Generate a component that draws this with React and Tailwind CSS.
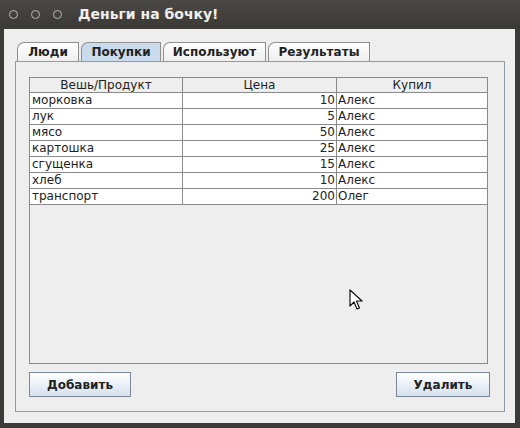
import React from 'react';

const rows = [
  { name: 'морковка', price: 10, who: 'Алекс' },
  { name: 'лук', price: 5, who: 'Алекс' },
  { name: 'мясо', price: 50, who: 'Алекс' },
  { name: 'картошка', price: 25, who: 'Алекс' },
  { name: 'сгущенка', price: 15, who: 'Алекс' },
  { name: 'хлеб', price: 10, who: 'Алекс' },
  { name: 'транспорт', price: 200, who: 'Олег' },
];

const tabs = [
  { label: 'Люди', w: 'w-[62px]' },
  { label: 'Покупки', w: 'w-[80px]', active: true },
  { label: 'Используют', w: 'w-[103px]' },
  { label: 'Результаты', w: 'w-[102px]' },
];

const font = { fontFamily: '"DejaVu Sans", "Liberation Sans", sans-serif' };

const App = () => {
  return (
    <div className="w-[520px] h-[428px] bg-[#3b3a36] flex flex-col relative overflow-hidden" style={font}>
      {/* Title bar */}
      <div className="h-[29px] flex items-center bg-gradient-to-b from-[#4a4945] to-[#3a3935] shrink-0">
        <div className="flex items-center gap-[13px] pl-[9px]">
          {[0, 1, 2].map((i) => (
            <div key={i} className="w-[9px] h-[9px] rounded-full border-[1.5px] border-[#b9b7b0]" />
          ))}
        </div>
        <div className="ml-[16px] text-[14px] font-bold text-[#f0efeb]">Деньги на бочку!</div>
      </div>

      {/* Window body */}
      <div className="ml-[4px] mr-[5px] mb-[5px] flex-1 bg-[#eeeeee] pl-[11px] pr-[10px] pt-[13px] pb-[11px] flex flex-col">
        {/* Tabs */}
        <div className="flex h-[19px] pl-[2px] gap-[2px] items-end">
          {tabs.map((t) => (
            <div
              key={t.label}
              className={`${t.w} h-[19px] flex items-center justify-center text-[12px] font-bold text-[#222] border border-b-0 border-[#8e8e8e] rounded-tl-[7px] ${
                t.active ? 'bg-[#c9dbed]' : 'bg-gradient-to-b from-[#ffffff] to-[#eeeeee]'
              }`}
            >
              {t.label}
            </div>
          ))}
        </div>

        {/* Tab panel */}
        <div className="flex-1 border border-[#8e9aa6] bg-[#eeeeee] pl-[13px] pr-[16px] pt-[15px] pb-[13px] flex flex-col">
          {/* Table */}
          <div className="h-[287px] border border-[#8a8a8a] bg-[#eeeeee] flex flex-col">
            <div className="grid grid-cols-[153px_154px_1fr] h-[15px] bg-[#eeeeee] border-b border-[#8a8a8a] text-[12px] text-[#222] leading-[14px]">
              <div className="text-center border-r border-[#8a8a8a]">Вешь/Продукт</div>
              <div className="text-center border-r border-[#8a8a8a]">Цена</div>
              <div className="text-center">Купил</div>
            </div>
            {rows.map((r) => (
              <div
                key={r.name}
                className="grid grid-cols-[153px_154px_1fr] h-[16px] bg-white border-b border-[#8a8a8a] text-[12px] text-[#222] leading-[15px]"
              >
                <div className="pl-[2px] border-r border-[#8a8a8a]">{r.name}</div>
                <div className="text-right pr-[1px] border-r border-[#8a8a8a]">{r.price}</div>
                <div className="pl-[1px]">{r.who}</div>
              </div>
            ))}
          </div>

          {/* Buttons */}
          <div className="flex justify-between mt-[8px]">
            <button className="w-[102px] h-[25px] border border-[#7b8794] bg-gradient-to-b from-[#ffffff] to-[#d5e1ee] text-[12px] font-bold text-[#222]">
              Добавить
            </button>
            <button className="w-[94px] h-[25px] border border-[#7b8794] bg-gradient-to-b from-[#ffffff] to-[#d5e1ee] text-[12px] font-bold text-[#222] -mr-[2px]">
              Удалить
            </button>
          </div>
        </div>
      </div>

      {/* Mouse cursor */}
      <svg className="absolute left-[349px] top-[289px]" width="14" height="22" viewBox="0 0 14 22">
        <path d="M1 1 L1 17 L5 13 L8 20 L10.5 19 L7.5 12 L13 12 Z" fill="#fff" stroke="#111" strokeWidth="1.2" strokeLinejoin="round" />
      </svg>
    </div>
  );
};

export default App;
